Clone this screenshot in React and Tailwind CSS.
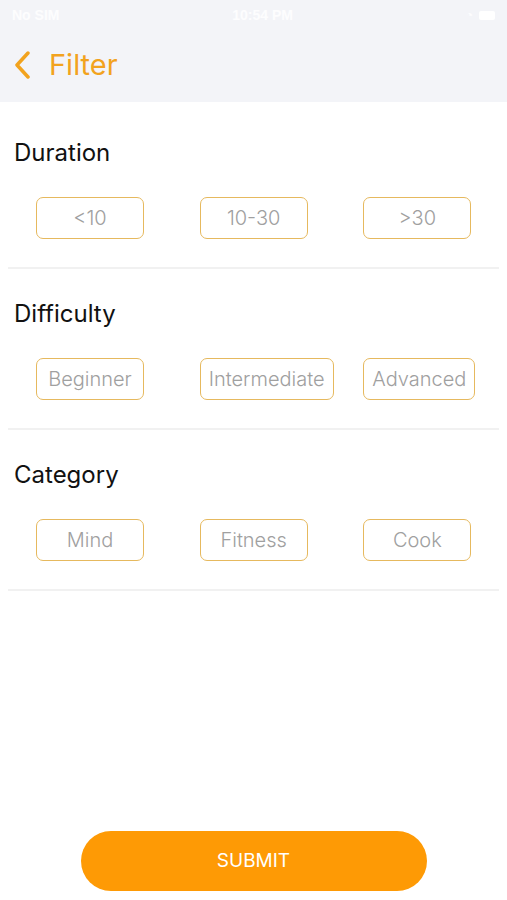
import React from 'react'

const sections = [
    { title: 'Duration', options: ['<10', '10-30', '>30'] },
    { title: 'Difficulty', options: ['Beginner', 'Intermediate', 'Advanced'] },
    { title: 'Category', options: ['Mind', 'Fitness', 'Cook'] },
]

function Option({ label }) {
    return (
        <div className="pl-[28px]">
            <button
                type="button"
                className="h-[42px] min-w-[108px] px-[8px] rounded-[7px] border-[1.5px] border-[#e6b95e] bg-white text-[20px] font-light text-[#a0a0a0] font-['Inter',sans-serif]"
            >
                {label}
            </button>
        </div>
    )
}

export default function App() {
    return (
        <div className="w-[507px] h-[900px] bg-white flex flex-col font-['Liberation_Sans',Arial,sans-serif] overflow-hidden">
            {/* header */}
            <div className="h-[102px] bg-[#f3f4f8] flex flex-col">
                <div className="h-[30px] flex items-center justify-between px-[12px] text-white/80 text-[14px] font-semibold">
                    <span>No SIM</span>
                    <span>10:54 PM</span>
                    <div className="flex items-center gap-[6px]">
                        <span className="text-[12px]">◔</span>
                        <div className="w-[16px] h-[9px] bg-white rounded-[2px]"></div>
                    </div>
                </div>
                <div className="flex items-center h-[70px] pl-[12px] gap-[17px] text-[#f2a31e]">
                    <svg width="20" height="28" viewBox="0 0 20 28" fill="none">
                        <path d="M16 2 L5 14 L16 26" stroke="#f2a31e" strokeWidth="3.5" strokeLinecap="round" strokeLinejoin="round" />
                    </svg>
                    <span className="text-[29px] font-['Inter',sans-serif]">Filter</span>
                </div>
            </div>

            {/* sections */}
            <div className="flex flex-col px-[8px]">
                {sections.map((s, i) => (
                    <div key={s.title} className={`flex flex-col border-b-[2px] border-[#f1f1f1] ${i === 0 ? 'pt-[35px]' : 'pt-[29px]'} pb-[28px]`}>
                        <div className="pl-[6px] text-[24px] leading-[32px] text-[#111] font-['Inter',sans-serif]">{s.title}</div>
                        <div className="grid grid-cols-3 mt-[28px]">
                            {s.options.map(o => <Option key={o} label={o} />)}
                        </div>
                    </div>
                ))}
            </div>

            <div className="flex-1"></div>

            <div className="flex justify-center pb-[9px]">
                <button type="button" className="w-[346px] h-[60px] rounded-full bg-[#fe9a05] text-white text-[19px] font-['Inter',sans-serif]">
                    SUBMIT
                </button>
            </div>
        </div>
    )
}
